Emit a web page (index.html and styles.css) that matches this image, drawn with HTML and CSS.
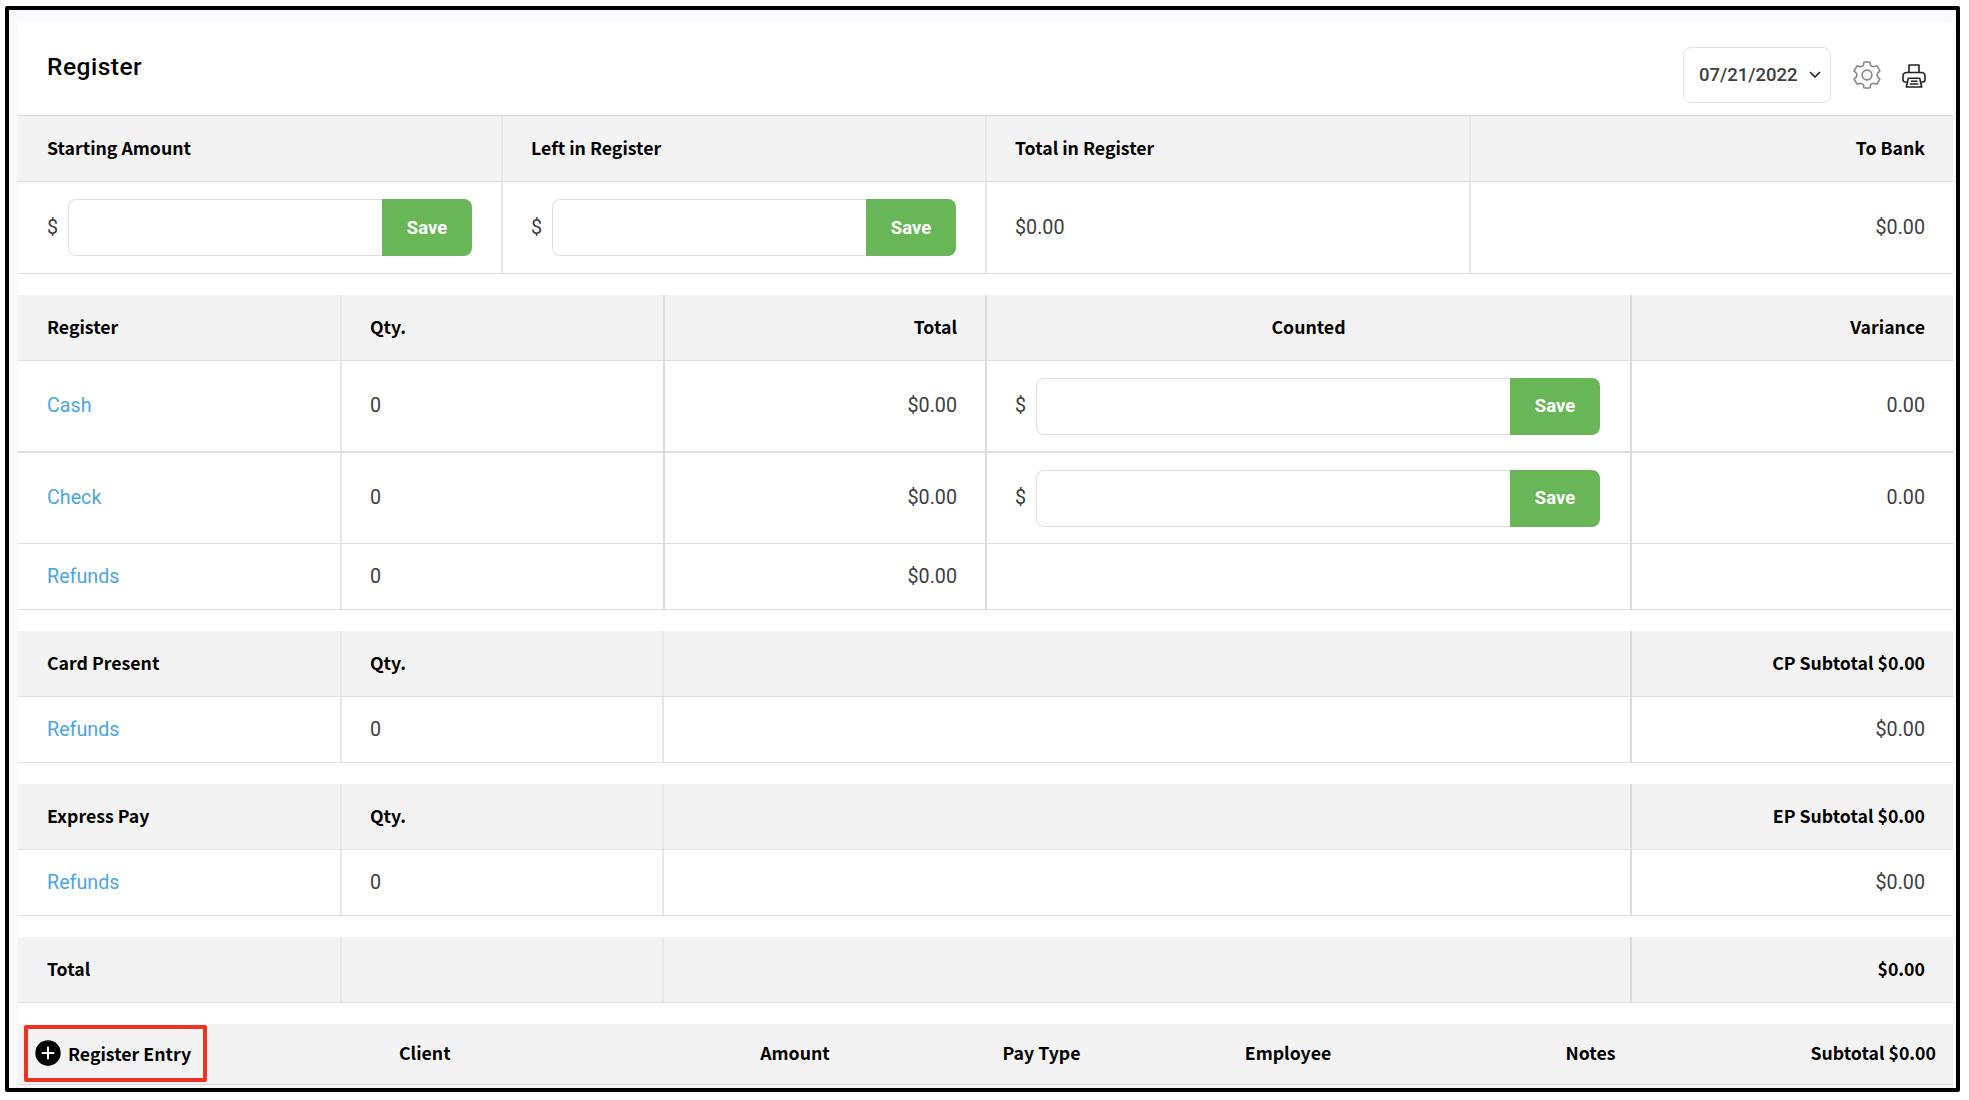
FILE: index.html
```html
<!DOCTYPE html>
<html lang="en">
<head>
<meta charset="utf-8">
<title>Register</title>
<link rel="stylesheet" href="styles.css">
</head>
<body>
<main class="frame">
  <div class="card">
    <header class="head">
      <h1 class="title">Register</h1>
      <div class="tools">
        <div class="date"><span>07/21/2022</span>
          <svg class="chev" viewBox="0 0 12 8"><path d="M1.5 1.5 6 6l4.5-4.5"/></svg>
        </div>
        <svg class="gear" viewBox="0 0 28 28"><path d="M10.700 1.800Q10.800 1 11.600 1H16.400Q17.200 1 17.300 1.800V3.300Q17.400 4.500 18.500 5Q19.700 5.700 20.700 5.700L22.900 4.900Q23.700 4.600 24.200 5.400L26.600 9.400Q27 10.200 26.300 10.700L25 11.700Q24.200 12.500 24.200 14Q24.200 15.500 25 16.300L26.300 17.300Q27 17.800 26.600 18.600L24.200 22.600Q23.700 23.400 22.900 23.100L20.700 22.300Q19.700 22.300 18.500 23Q17.400 23.500 17.300 24.700V26.200Q17.200 27 16.400 27H11.600Q10.800 27 10.700 26.200V24.700Q10.600 23.500 9.500 23Q8.300 22.300 7.300 22.300L5.100 23.100Q4.300 23.400 3.800 22.600L1.400 18.600Q1 17.800 1.700 17.300L3 16.300Q3.800 15.500 3.800 14Q3.800 12.500 3 11.700L1.700 10.700Q1 10.200 1.400 9.400L3.800 5.400Q4.300 4.600 5.100 4.900L7.300 5.700Q8.300 5.700 9.500 5Q10.600 4.500 10.700 3.300Z"/><circle cx="14" cy="14" r="4.900"/></svg>
        <svg class="printer" viewBox="0 0 24 24"><path d="M7 8.500V1h10v7.500M4.500 18H3.200Q1 18 1 15.800V12.200Q1 8.500 4.700 8.500H19.300Q23 8.500 23 12.200V15.800Q23 18 20.800 18H19.500M6.300 14.200H17.700L19.700 23H4.300ZM9 17.300H15.500M7.800 20H16.200"/></svg>
      </div>
    </header>

    <section class="table quarters">
      <div class="row th">
        <div class="cell">Starting Amount</div><div class="cell">Left in Register</div><div class="cell">Total in Register</div><div class="cell right">To Bank</div>
      </div>
      <div class="row tall">
        <div class="cell money">$<input class="field" type="text"><button class="save">Save</button></div>
        <div class="cell money">$<input class="field" type="text"><button class="save">Save</button></div>
        <div class="cell">$0.00</div><div class="cell right">$0.00</div>
      </div>
    </section>

    <section class="table sixths">
      <div class="row th">
        <div class="cell">Register</div><div class="cell strong">Qty.</div><div class="cell right strong">Total</div><div class="cell center strong">Counted</div><div class="cell right">Variance</div>
      </div>
      <div class="row cash">
        <div class="cell"><a class="link">Cash</a></div><div class="cell strong">0</div><div class="cell right strong">$0.00</div>
        <div class="cell money strong">$<input class="field" type="text"><button class="save">Save</button></div><div class="cell right">0.00</div>
      </div>
      <div class="row check">
        <div class="cell"><a class="link">Check</a></div><div class="cell strong">0</div><div class="cell right strong">$0.00</div>
        <div class="cell money strong">$<input class="field" type="text"><button class="save">Save</button></div><div class="cell right">0.00</div>
      </div>
      <div class="row">
        <div class="cell"><a class="link">Refunds</a></div><div class="cell strong">0</div><div class="cell right strong">$0.00</div><div class="cell strong"></div><div class="cell"></div>
      </div>
    </section>

    <section class="table merged">
      <div class="row th">
        <div class="cell">Card Present</div><div class="cell">Qty.</div><div class="cell strong"></div><div class="cell right">CP Subtotal $0.00</div>
      </div>
      <div class="row">
        <div class="cell"><a class="link">Refunds</a></div><div class="cell">0</div><div class="cell strong"></div><div class="cell right">$0.00</div>
      </div>
    </section>

    <section class="table merged">
      <div class="row th">
        <div class="cell">Express Pay</div><div class="cell">Qty.</div><div class="cell strong"></div><div class="cell right">EP Subtotal $0.00</div>
      </div>
      <div class="row">
        <div class="cell"><a class="link">Refunds</a></div><div class="cell">0</div><div class="cell strong"></div><div class="cell right">$0.00</div>
      </div>
    </section>

    <section class="table merged">
      <div class="row th">
        <div class="cell">Total</div><div class="cell"></div><div class="cell strong"></div><div class="cell right">$0.00</div>
      </div>
    </section>

    <section class="entries">
      <div class="entry-slot">
        <div class="entry">
          <svg class="plus" viewBox="0 0 26 26"><circle cx="13" cy="13" r="12.700"/><path d="M13 7.500v11M7.500 13h11"/></svg>
          <span>Register Entry</span>
        </div>
      </div>
      <div class="col">Client</div><div class="col center">Amount</div><div class="col center">Pay Type</div><div class="col center">Employee</div><div class="col center">Notes</div><div class="col right sub">Subtotal $0.00</div>
    </section>
  </div>
</main>
</body>
</html>
```

FILE: styles.css
```css
* { box-sizing: border-box; }
body {
  margin: 0;
  width: 1970px;
  height: 1100px;
  padding: 6px 9px 8px 5px;
  background: #fff;
  border-right: 1px solid #cfcfcf;
  font: 400 19.700px/24px Roboto, sans-serif;
  color: #3d3d3d;
  overflow: hidden;
}
.frame {
  width: 1955px;
  height: 1086px;
  border: 4px solid #000;
  border-radius: 2px;
  background: #f8f9fd;
  padding: 12px 3px 0 9px;
}
.card { background: #fff; border-radius: 4px 4px 0 0; height: 1062px; }
.head {
  height: 94px;
  border-bottom: 1px solid #dcdcdc;
  display: flex;
  justify-content: space-between;
  padding: 0 27px 0 29px;
}
.title {
  margin: 28px 0 0;
  font: 500 24.500px/34px Roboto, sans-serif;
  letter-spacing: .5px;
  color: #000;
}
.tools { display: flex; align-items: center; height: 56px; margin-top: 25px; }
.date {
  width: 148px;
  height: 56px;
  border: 1px solid #e2e2e2;
  border-radius: 8px;
  display: flex;
  align-items: center;
  justify-content: space-between;
  padding: 0 9px 0 15px;
  font-weight: 500;
  font-size: 18.500px;
}
.chev { width: 12px; height: 8px; fill: none; stroke: #222; stroke-width: 1.700; stroke-linecap: round; stroke-linejoin: round; }
.gear { width: 28px; height: 28px; margin-left: 22px; fill: none; stroke: #858585; stroke-width: 1.600; }
.printer { width: 24px; height: 24px; margin: 1px 0 0 21px; fill: none; stroke: #222; stroke-width: 1.600; stroke-linejoin: round; }
.table + .table { margin-top: 21px; }
.row { display: grid; height: 66px; border-bottom: 1px solid #dfdfdf; }
.quarters .row { grid-template-columns: 485px 484px 484px 1fr; }
.sixths .row { grid-template-columns: 324px 323px 322px 645px 1fr; }
.merged .row { grid-template-columns: 324px 322px 968px 1fr; }
.quarters .row.tall { height: 92px; }
.row.cash { height: 92px; border-bottom: 2px solid #dedede; }
.row.check { height: 91px; }
.th, .entries {
  background: #f3f3f3;
  color: #000;
  font: 700 17.700px/24px "Noto Sans CJK JP", sans-serif;
}
.cell {
  display: flex;
  align-items: center;
  padding: 0 28px 0 29px;
  border-right: 2px solid #e8e8e8;
}
.cell + .cell { padding-left: 28px; }
.th .cell { padding-bottom: 4px; }
.cell.strong { border-right-color: #dcdcdc; }
.cell:last-child { border-right: 0; }
.right { justify-content: flex-end; text-align: right; }
.center { justify-content: center; text-align: center; }
.link { color: #4ba6df; }
.cell.money { padding-right: 29px; }
.sixths .cell.money { padding-right: 30px; }
.field {
  flex: 1;
  min-width: 0;
  height: 57px;
  margin-left: 10px;
  border: 1px solid #e0e0e0;
  border-right: 0;
  border-radius: 8px 0 0 8px;
  background: #fff;
}
.save {
  width: 90px;
  height: 57px;
  padding: 0;
  border: 0;
  border-radius: 0 8px 8px 0;
  background: #68b658;
  color: #fff;
  font: 700 18.500px/24px Roboto, sans-serif;
}
.entries {
  margin-top: 21px;
  height: 61px;
  padding-bottom: 2px;
  border-bottom: 1px solid #dcdcdc;
  display: grid;
  grid-template-columns: 381px 273px 246px 247px 246px 359px 1fr;
  align-items: center;
}
.col { padding-bottom: 2px; }
.entry-slot { padding-left: 6px; }
.entry {
  width: 183px;
  height: 57px;
  border: 4px solid #ea3323;
  border-radius: 2px;
  display: flex;
  align-items: center;
  gap: 7px;
  padding-left: 7px;
}
.plus { width: 26px; height: 26px; flex: none; }
.entry span { white-space: nowrap; }
.plus path { stroke: #fff; stroke-width: 2; stroke-linecap: round; }
.sub { padding-right: 17px; }
```
